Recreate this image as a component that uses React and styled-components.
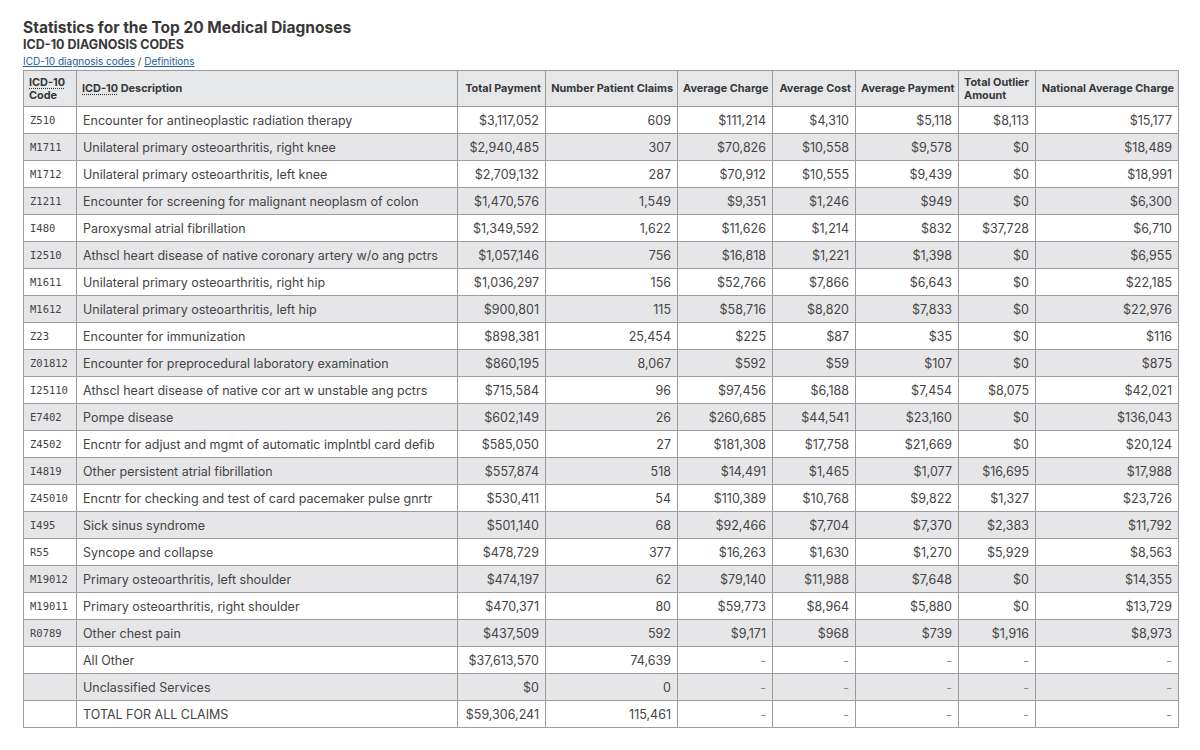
import styled, { createGlobalStyle } from "styled-components";

const GlobalStyle = createGlobalStyle`
  body {
    margin: 0;
    background: #fff;
    font-family: Inter, "Liberation Sans", sans-serif;
    color: #444;
  }
`;

const Page = styled.div`
  padding: 18px 22px 0 23px;
`;

const Title = styled.h1`
  margin: 0;
  font-size: 15.5px;
  line-height: 19px;
  font-weight: 700;
  color: #383838;
`;

const Subtitle = styled.h2`
  margin: 0;
  font-size: 12.5px;
  line-height: 16px;
  font-weight: 700;
  color: #383838;
`;

const LinkRow = styled.div`
  font-size: 10px;
  line-height: 14px;
  color: #444;
  margin-top: 1px;

  a {
    color: #1b5a9b;
    text-decoration: underline;
  }
`;

const Table = styled.table`
  width: 1155px;
  table-layout: fixed;
  border-collapse: collapse;
  margin-top: 2px;
  font-size: 12.5px;
`;

const Th = styled.th`
  background: #e6e7e9;
  border: 1px solid #9b9b9b;
  font-size: 10.9px;
  font-weight: 700;
  line-height: 13px;
  color: #383838;
  height: 35px;
  padding: 0 4px 0 5px;
  text-align: ${(p) => (p.left ? "left" : "right")};
  white-space: ${(p) => (p.wrap ? "normal" : "nowrap")};
`;

const Abbr = styled.abbr`
  text-decoration: underline dotted #333;
  text-underline-offset: 2px;
`;

const Row = styled.tr`
  background: ${(p) => (p.striped ? "#e6e6e8" : "#fff")};
`;

const Td = styled.td`
  border: 1px solid #9b9b9b;
  height: 26px;
  padding: 0 6px;
  white-space: nowrap;
  overflow: hidden;
  text-align: ${(p) => (p.left ? "left" : "right")};
  color: #444;
`;

const CodeCell = styled(Td)`
  font-family: "DejaVu Sans Mono", "Liberation Mono", monospace;
  font-size: 10.5px;
`;

const Dash = styled.span`
  color: #888;
`;

const widths = [53, 381, 88, 132, 95, 83, 103, 77, 143];

const rows = [
  ["Z510", "Encounter for antineoplastic radiation therapy", "$3,117,052", "609", "$111,214", "$4,310", "$5,118", "$8,113", "$15,177"],
  ["M1711", "Unilateral primary osteoarthritis, right knee", "$2,940,485", "307", "$70,826", "$10,558", "$9,578", "$0", "$18,489"],
  ["M1712", "Unilateral primary osteoarthritis, left knee", "$2,709,132", "287", "$70,912", "$10,555", "$9,439", "$0", "$18,991"],
  ["Z1211", "Encounter for screening for malignant neoplasm of colon", "$1,470,576", "1,549", "$9,351", "$1,246", "$949", "$0", "$6,300"],
  ["I480", "Paroxysmal atrial fibrillation", "$1,349,592", "1,622", "$11,626", "$1,214", "$832", "$37,728", "$6,710"],
  ["I2510", "Athscl heart disease of native coronary artery w/o ang pctrs", "$1,057,146", "756", "$16,818", "$1,221", "$1,398", "$0", "$6,955"],
  ["M1611", "Unilateral primary osteoarthritis, right hip", "$1,036,297", "156", "$52,766", "$7,866", "$6,643", "$0", "$22,185"],
  ["M1612", "Unilateral primary osteoarthritis, left hip", "$900,801", "115", "$58,716", "$8,820", "$7,833", "$0", "$22,976"],
  ["Z23", "Encounter for immunization", "$898,381", "25,454", "$225", "$87", "$35", "$0", "$116"],
  ["Z01812", "Encounter for preprocedural laboratory examination", "$860,195", "8,067", "$592", "$59", "$107", "$0", "$875"],
  ["I25110", "Athscl heart disease of native cor art w unstable ang pctrs", "$715,584", "96", "$97,456", "$6,188", "$7,454", "$8,075", "$42,021"],
  ["E7402", "Pompe disease", "$602,149", "26", "$260,685", "$44,541", "$23,160", "$0", "$136,043"],
  ["Z4502", "Encntr for adjust and mgmt of automatic implntbl card defib", "$585,050", "27", "$181,308", "$17,758", "$21,669", "$0", "$20,124"],
  ["I4819", "Other persistent atrial fibrillation", "$557,874", "518", "$14,491", "$1,465", "$1,077", "$16,695", "$17,988"],
  ["Z45010", "Encntr for checking and test of card pacemaker pulse gnrtr", "$530,411", "54", "$110,389", "$10,768", "$9,822", "$1,327", "$23,726"],
  ["I495", "Sick sinus syndrome", "$501,140", "68", "$92,466", "$7,704", "$7,370", "$2,383", "$11,792"],
  ["R55", "Syncope and collapse", "$478,729", "377", "$16,263", "$1,630", "$1,270", "$5,929", "$8,563"],
  ["M19012", "Primary osteoarthritis, left shoulder", "$474,197", "62", "$79,140", "$11,988", "$7,648", "$0", "$14,355"],
  ["M19011", "Primary osteoarthritis, right shoulder", "$470,371", "80", "$59,773", "$8,964", "$5,880", "$0", "$13,729"],
  ["R0789", "Other chest pain", "$437,509", "592", "$9,171", "$968", "$739", "$1,916", "$8,973"],
  ["", "All Other", "$37,613,570", "74,639", "-", "-", "-", "-", "-"],
  ["", "Unclassified Services", "$0", "0", "-", "-", "-", "-", "-"],
  ["", "TOTAL FOR ALL CLAIMS", "$59,306,241", "115,461", "-", "-", "-", "-", "-"],
];

function App() {
  return (
    <>
      <GlobalStyle />
      <Page>
        <Title>Statistics for the Top 20 Medical Diagnoses</Title>
        <Subtitle>ICD-10 DIAGNOSIS CODES</Subtitle>
        <LinkRow>
          <a href="#">ICD-10 diagnosis codes</a> / <a href="#">Definitions</a>
        </LinkRow>
        <Table>
          <colgroup>
            {widths.map((w, i) => (
              <col key={i} style={{ width: w }} />
            ))}
          </colgroup>
          <thead>
            <tr>
              <Th left wrap>
                <Abbr>ICD-10</Abbr> Code
              </Th>
              <Th left>
                <Abbr>ICD-10</Abbr> Description
              </Th>
              <Th>Total Payment</Th>
              <Th>Number Patient Claims</Th>
              <Th>Average Charge</Th>
              <Th>Average Cost</Th>
              <Th>Average Payment</Th>
              <Th left wrap>Total Outlier Amount</Th>
              <Th>National Average Charge</Th>
            </tr>
          </thead>
          <tbody>
            {rows.map((r, i) => (
              <Row key={i} striped={i % 2 === 1}>
                <CodeCell left>{r[0]}</CodeCell>
                <Td left>{r[1]}</Td>
                {r.slice(2).map((v, j) => (
                  <Td key={j}>{v === "-" ? <Dash>-</Dash> : v}</Td>
                ))}
              </Row>
            ))}
          </tbody>
        </Table>
      </Page>
    </>
  );
}

export default App;
